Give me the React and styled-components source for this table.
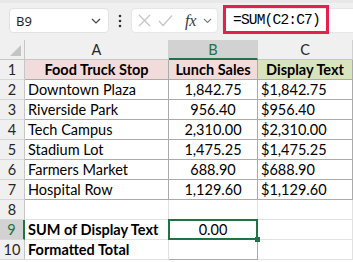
import React from 'react';
import styled, { createGlobalStyle, css } from 'styled-components';

const GlobalStyle = createGlobalStyle`
  html, body {
    margin: 0;
    padding: 0;
    background: #ffffff;
    overflow: hidden;
  }
  * { box-sizing: border-box; }
`;

const Page = styled.div`
  width: 353px;
  height: 262px;
  overflow: hidden;
  font-family: Lato, "Liberation Sans", sans-serif;
`;

const Toolbar = styled.div`
  height: 40px;
  background: #f0f0f0;
  border-top: 3px solid #e8e8e8;
  display: flex;
  align-items: flex-start;
  padding: 5px 0 0 9px;
`;

const NameBox = styled.div`
  width: 100px;
  height: 25px;
  background: #fff;
  border: 1px solid #e2e2e2;
  border-radius: 4px;
  display: flex;
  align-items: center;
  justify-content: space-between;
  padding: 0 7px 0 6px;
  font-family: "Noto Sans", "Open Sans", sans-serif;
  font-size: 13px;
  color: #1f1f1f;
`;

const Dots = styled.div`
  width: 22px;
  height: 25px;
  display: flex;
  align-items: center;
  justify-content: center;
`;

const FxBox = styled.div`
  width: 87px;
  height: 25px;
  background: #fff;
  border: 1px solid #e6e6e6;
  border-radius: 4px;
  display: flex;
  align-items: center;
  gap: 7px;
  padding-left: 6px;
`;

const Fx = styled.span`
  font-family: "Liberation Serif", serif;
  font-style: italic;
  font-size: 16px;
  color: #3a3a3a;
  margin-left: 5px;
  letter-spacing: -0.3px;
`;

const FormulaField = styled.div`
  position: relative;
  flex: 1;
  height: 25px;
  margin: 0 -12px 0 4px;
  background: #fff;
  border: 1px solid #e6e6e6;
  border-radius: 4px;
`;

const Highlight = styled.div`
  position: absolute;
  left: 0;
  top: -4px;
  width: 106px;
  height: 29px;
  border: 3px solid #e5204f;
  display: flex;
  align-items: center;
  padding-left: 7px;
  font-family: "Liberation Mono", monospace;
  font-size: 14.5px;
  letter-spacing: -0.8px;
  color: #000;
`;

const Sheet = styled.div`
  display: grid;
  grid-template-columns: 25px 144px 89px 95px;
  grid-auto-rows: 20px;
`;

const Cell = styled.div`
  position: relative;
  display: flex;
  align-items: center;
  padding: 0 3px;
  font-size: 14.5px;
  color: #000;
  white-space: nowrap;
  overflow: visible;
  border-right: 1px solid ${p => (p.$table ? '#ababab' : '#e1e1e1')};
  border-bottom: 1px solid ${p => (p.$table ? '#ababab' : '#e1e1e1')};
  justify-content: ${p => (p.$center ? 'center' : 'flex-start')};
  font-weight: ${p => (p.$bold ? 700 : 400)};
  background: ${p => p.$bg || '#fff'};
  ${p => p.$selected && css`
    &::after {
      content: '';
      position: absolute;
      left: -1px;
      top: -1px;
      right: -1px;
      bottom: -1px;
      border: 2px solid #217346;
    }
    &::before {
      content: '';
      position: absolute;
      right: -3px;
      bottom: -3px;
      width: 5px;
      height: 5px;
      background: #217346;
      z-index: 2;
    }
  `}
`;

const ColHead = styled.div`
  position: relative;
  display: flex;
  align-items: center;
  justify-content: center;
  font-size: 14.5px;
  color: ${p => (p.$active ? '#217346' : '#262626')};
  background: ${p => (p.$active ? '#d2d2d2' : '#f0f0f0')};
  border-right: 1px solid #d0d0d0;
  border-bottom: ${p => (p.$active ? '2px solid #217346' : '1px solid #c6c6c6')};
`;

const Corner = styled(ColHead)`
  border-right-color: #c6c6c6;
  align-items: flex-end;
  justify-content: flex-end;
  padding: 0 3px 3px 0;
`;

const RowHead = styled.div`
  display: flex;
  align-items: center;
  justify-content: center;
  font-size: 14.5px;
  color: ${p => (p.$active ? '#217346' : '#262626')};
  background: ${p => (p.$active ? '#d2d2d2' : '#f0f0f0')};
  border-right: ${p => (p.$active ? '2px solid #217346' : '1px solid #c6c6c6')};
  border-bottom: 1px solid #d8d8d8;
`;

const rows = [
  ['Downtown Plaza', '1,842.75', '$1,842.75'],
  ['Riverside Park', '956.40', '$956.40'],
  ['Tech Campus', '2,310.00', '$2,310.00'],
  ['Stadium Lot', '1,475.25', '$1,475.25'],
  ['Farmers Market', '688.90', '$688.90'],
  ['Hospital Row', '1,129.60', '$1,129.60'],
];

const Chevron = ({ color = '#444', size = 10 }) => (
  <svg width={size} height={size * 0.6} viewBox="0 0 10 6">
    <path d="M1 1 L5 5 L9 1" fill="none" stroke={color} strokeWidth="1.2" />
  </svg>
);

export default function App() {
  return (
    <Page>
      <GlobalStyle />
      <Toolbar>
        <NameBox>
          <span>B9</span>
          <Chevron />
        </NameBox>
        <Dots>
          <svg width="4" height="14" viewBox="0 0 4 14">
            <circle cx="2" cy="2" r="1.3" fill="#333" />
            <circle cx="2" cy="7" r="1.3" fill="#333" />
            <circle cx="2" cy="12" r="1.3" fill="#333" />
          </svg>
        </Dots>
        <FxBox>
          <svg width="13" height="13" viewBox="0 0 13 13">
            <path d="M1 1 L12 12 M12 1 L1 12" stroke="#c4c4c4" strokeWidth="1.2" />
          </svg>
          <svg width="15" height="13" viewBox="0 0 15 13">
            <path d="M1 7 L5 11.5 L14 1.5" fill="none" stroke="#c4c4c4" strokeWidth="1.2" />
          </svg>
          <Fx>fx</Fx>
          <Chevron color="#777" size={9} />
        </FxBox>
        <FormulaField>
          <Highlight>=SUM(C2:C7)</Highlight>
        </FormulaField>
      </Toolbar>
      <Sheet>
        <Corner>
          <svg width="11" height="11" viewBox="0 0 11 11">
            <path d="M11 0 L11 11 L0 11 Z" fill="#c4c4c4" />
          </svg>
        </Corner>
        <ColHead>A</ColHead>
        <ColHead $active>B</ColHead>
        <ColHead>C</ColHead>

        <RowHead>1</RowHead>
        <Cell $table $bold $center $bg="#f2dcdb">Food Truck Stop</Cell>
        <Cell $table $bold $center $bg="#f2dcdb">Lunch Sales</Cell>
        <Cell $table $bold $center $bg="#d8e4bc">Display Text</Cell>

        {rows.map((r, i) => (
          <React.Fragment key={r[0]}>
            <RowHead>{i + 2}</RowHead>
            <Cell $table>{r[0]}</Cell>
            <Cell $table $center>{r[1]}</Cell>
            <Cell $table>{r[2]}</Cell>
          </React.Fragment>
        ))}

        <RowHead>8</RowHead>
        <Cell />
        <Cell />
        <Cell />

        <RowHead $active>9</RowHead>
        <Cell $bold>SUM of Display Text</Cell>
        <Cell $center $selected>0.00</Cell>
        <Cell />

        <RowHead>10</RowHead>
        <Cell $bold>Formatted Total</Cell>
        <Cell $table />
        <Cell />
      </Sheet>
    </Page>
  );
}
